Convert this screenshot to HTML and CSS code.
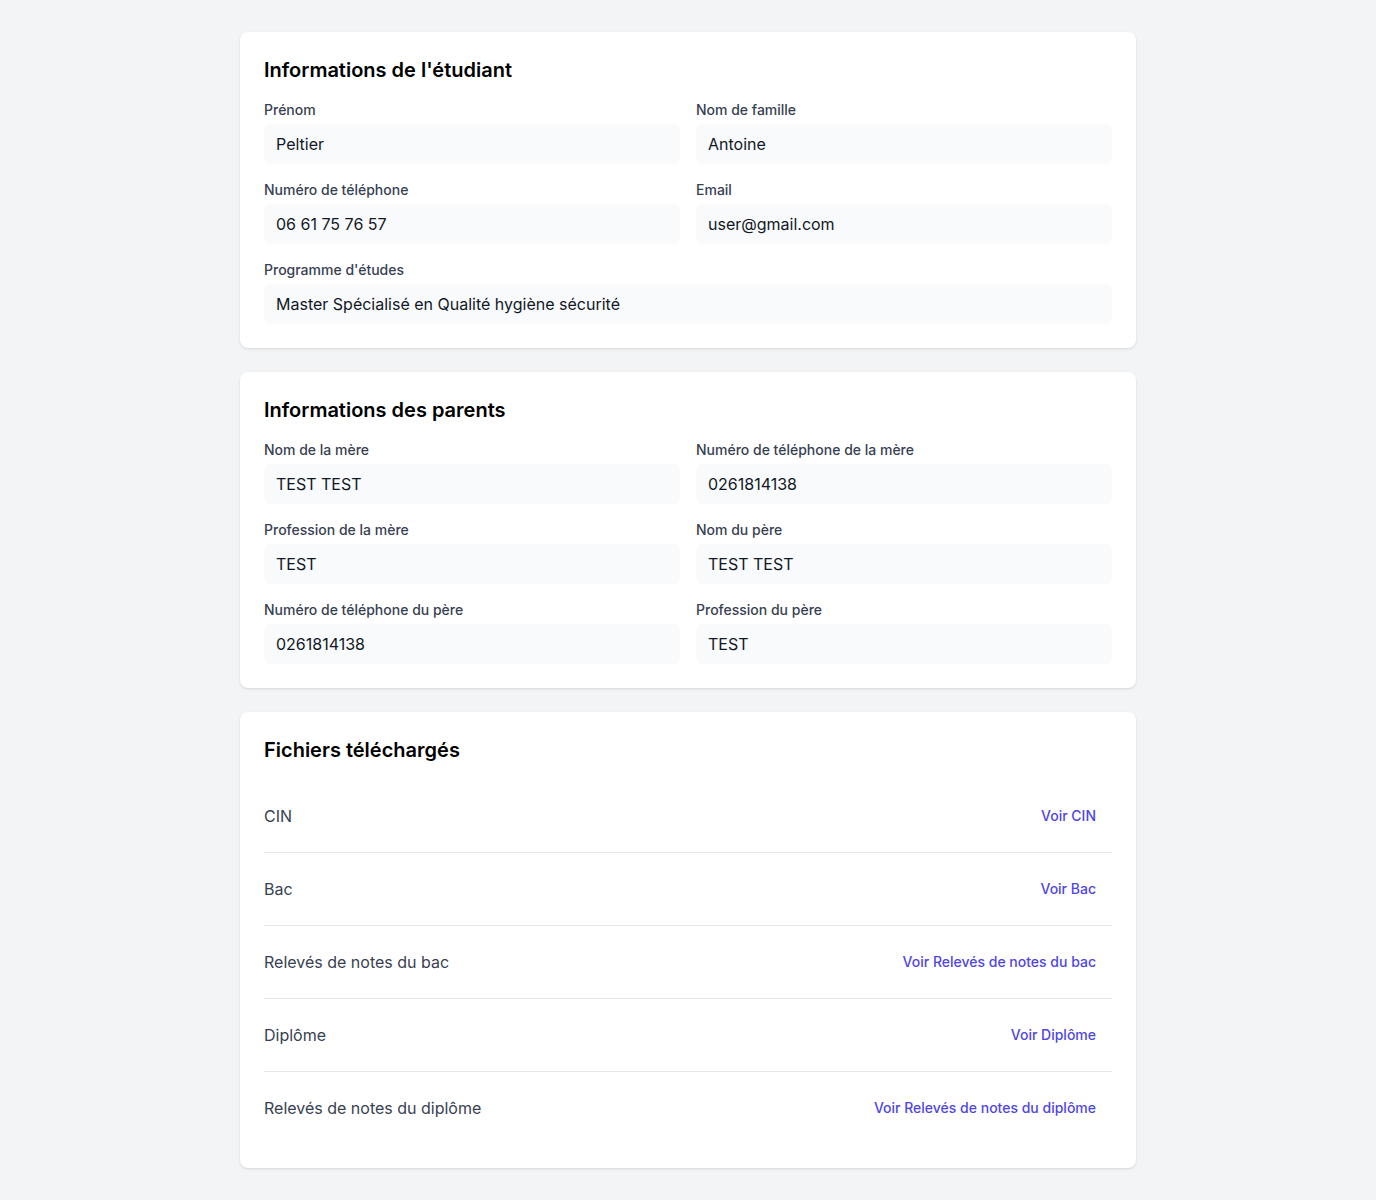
FILE: index.html
```html
<!DOCTYPE html>
<html lang="fr">
<head>
<meta charset="utf-8">
<title>Informations</title>
<link rel="stylesheet" href="styles.css">
</head>
<body>
<main class="page">
  <section class="card">
    <h2 class="card-title">Informations de l'étudiant</h2>
    <div class="grid">
      <div class="field"><label class="label">Prénom</label><div class="value">Peltier</div></div>
      <div class="field"><label class="label">Nom de famille</label><div class="value">Antoine</div></div>
      <div class="field"><label class="label">Numéro de téléphone</label><div class="value">06 61 75 76 57</div></div>
      <div class="field"><label class="label">Email</label><div class="value">user@gmail.com</div></div>
      <div class="field full"><label class="label">Programme d'études</label><div class="value">Master Spécialisé en Qualité hygiène sécurité</div></div>
    </div>
  </section>

  <section class="card">
    <h2 class="card-title">Informations des parents</h2>
    <div class="grid">
      <div class="field"><label class="label">Nom de la mère</label><div class="value">TEST TEST</div></div>
      <div class="field"><label class="label">Numéro de téléphone de la mère</label><div class="value">0261814138</div></div>
      <div class="field"><label class="label">Profession de la mère</label><div class="value">TEST</div></div>
      <div class="field"><label class="label">Nom du père</label><div class="value">TEST TEST</div></div>
      <div class="field"><label class="label">Numéro de téléphone du père</label><div class="value">0261814138</div></div>
      <div class="field"><label class="label">Profession du père</label><div class="value">TEST</div></div>
    </div>
  </section>

  <section class="card">
    <h2 class="card-title">Fichiers téléchargés</h2>
    <ul class="files">
      <li class="file"><span class="file-name">CIN</span><a class="file-link" href="#">Voir CIN</a></li>
      <li class="file"><span class="file-name">Bac</span><a class="file-link" href="#">Voir Bac</a></li>
      <li class="file"><span class="file-name">Relevés de notes du bac</span><a class="file-link" href="#">Voir Relevés de notes du bac</a></li>
      <li class="file"><span class="file-name">Diplôme</span><a class="file-link" href="#">Voir Diplôme</a></li>
      <li class="file"><span class="file-name">Relevés de notes du diplôme</span><a class="file-link" href="#">Voir Relevés de notes du diplôme</a></li>
    </ul>
  </section>
</main>
</body>
</html>
```

FILE: styles.css
```css
* { box-sizing: border-box; }
html, body { margin: 0; padding: 0; }
body {
  background: #f3f4f6;
  font-family: Inter, "Noto Sans", "Liberation Sans", sans-serif;
  color: #111827;
}
.page {
  width: 896px;
  margin: 0 auto;
  padding: 32px 0;
  display: flex;
  flex-direction: column;
  gap: 24px;
}
.card {
  background: #fff;
  border-radius: 8px;
  box-shadow: 0 1px 3px rgba(0,0,0,0.1), 0 1px 2px -1px rgba(0,0,0,0.1);
  padding: 24px;
}
.card-title {
  margin: 0 0 16px;
  font-size: 20px;
  line-height: 28px;
  font-weight: 600;
  color: #000;
}
.grid {
  display: grid;
  grid-template-columns: 1fr 1fr;
  gap: 16px;
}
.field { display: flex; flex-direction: column; gap: 4px; }
.field.full { grid-column: 1 / -1; }
.label {
  font-size: 14px;
  line-height: 20px;
  font-weight: 500;
  color: #374151;
}
.value {
  height: 40px;
  display: flex;
  align-items: center;
  padding: 0 12px;
  background: #f9fafb;
  border-radius: 6px;
  font-size: 16px;
  color: #111827;
}
.files { list-style: none; margin: 0; padding: 0; }
.file {
  display: flex;
  justify-content: space-between;
  align-items: center;
  padding: 24px 0;
  line-height: 24px;
  border-top: 1px solid #e5e7eb;
}
.file:first-child { border-top: 0; }
.file-name { font-size: 16px; color: #374151; }
.file-link {
  margin-right: 16px;
  font-size: 14px;
  font-weight: 500;
  color: #4f46e5;
  text-decoration: none;
}
```
